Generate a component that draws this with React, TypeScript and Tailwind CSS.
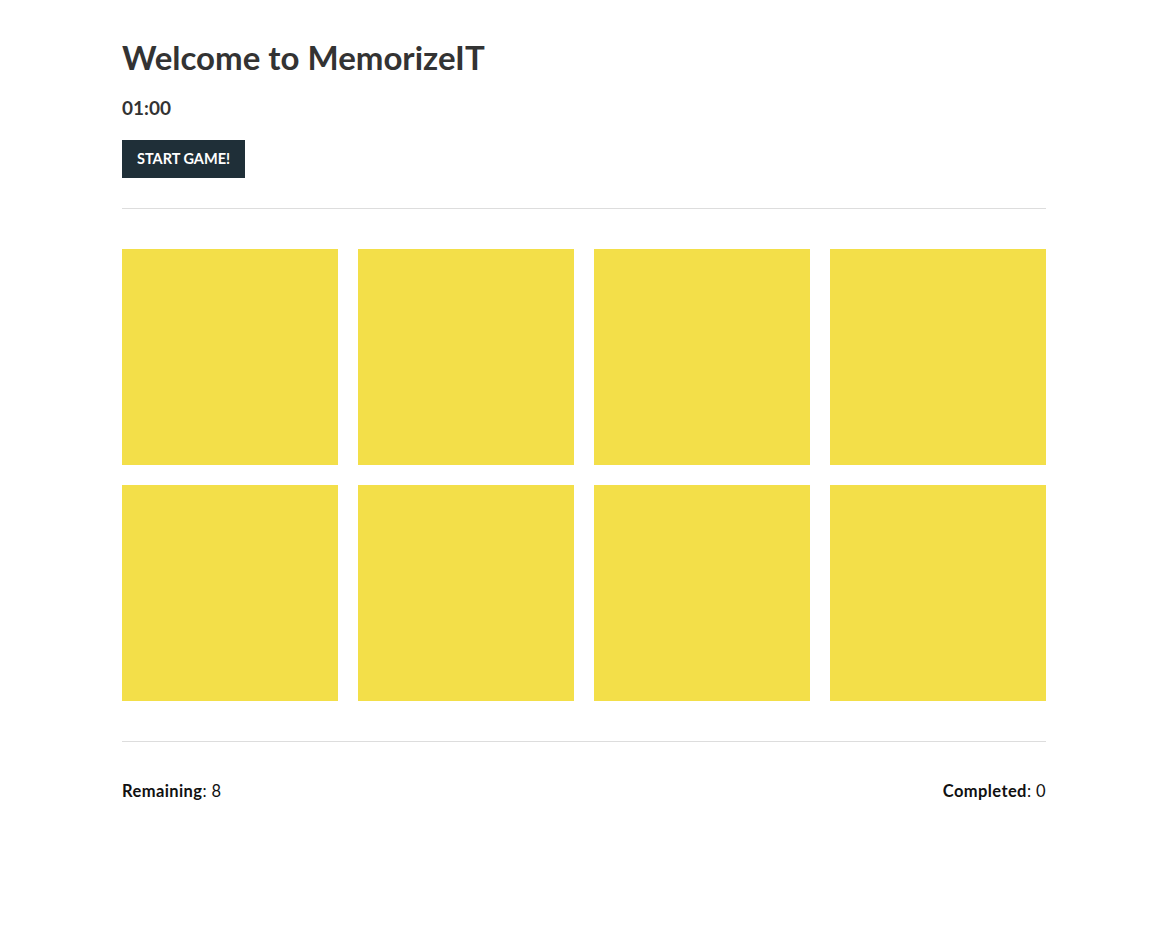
import React from "react";

export default function App() {
  const cards = Array.from({ length: 8 });
  return (
    <div className="min-h-[932px] bg-white" style={{ fontFamily: "Lato, 'Noto Sans', sans-serif" }}>
      <div className="ml-[122px] w-[924px] pt-[35px]">
        <h1 className="text-[33px] leading-[44px] font-bold text-[#333333]">Welcome to MemorizeIT</h1>
        <div className="mt-[17px] text-[19px] leading-[24px] font-bold text-[#333333]">01:00</div>
        <button className="mt-[20px] h-[38px] w-[123px] bg-[#1f2f38] text-white text-[14.5px] font-bold uppercase">
          Start Game!
        </button>
        <div className="mt-[30px] h-px bg-[#dddddd]" />
        <div className="mt-[40px] grid grid-cols-4 gap-[20px]">
          {cards.map((_, i) => (
            <div key={i} className="h-[216px] bg-[#f3df49]" />
          ))}
        </div>
        <div className="mt-[40px] h-px bg-[#dddddd]" />
        <div className="mt-[39px] flex justify-between text-[16.5px] leading-[20px] tracking-[0.4px] text-[#111111]">
          <div>
            <span className="font-bold">Remaining</span>: 8
          </div>
          <div>
            <span className="font-bold">Completed</span>: 0
          </div>
        </div>
      </div>
    </div>
  );
}
